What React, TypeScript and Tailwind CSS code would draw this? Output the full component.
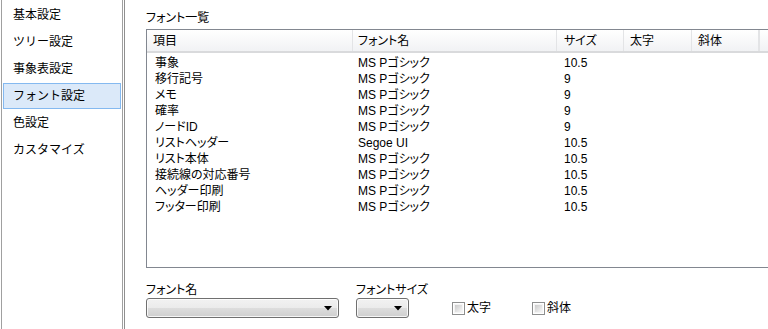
const navItems = ["基本設定", "ツリー設定", "事象表設定", "フォント設定", "色設定", "カスタマイズ"];

const rows = [
  ["事象", "MS Pゴシック", "10.5"],
  ["移行記号", "MS Pゴシック", "9"],
  ["メモ", "MS Pゴシック", "9"],
  ["確率", "MS Pゴシック", "9"],
  ["ノードID", "MS Pゴシック", "9"],
  ["リストヘッダー", "Segoe UI", "10.5"],
  ["リスト本体", "MS Pゴシック", "10.5"],
  ["接続線の対応番号", "MS Pゴシック", "10.5"],
  ["ヘッダー印刷", "MS Pゴシック", "10.5"],
  ["フッター印刷", "MS Pゴシック", "10.5"],
];

function Arrow() {
  return (
    <svg width="8" height="5" viewBox="0 0 8 5" className="block">
      <path d="M0 0h8L4 4.5z" fill="#000" />
    </svg>
  );
}

function Combo({ width }: { width: string }) {
  return (
    <div
      className={`${width} h-[20px] rounded-[3px] border border-[#707070] bg-[linear-gradient(#f2f2f2,#ebebeb_50%,#dddddd_50%,#cfcfcf)] flex items-center justify-end pr-[6px] shadow-[inset_0_0_0_1px_rgba(255,255,255,0.8)]`}
    >
      <Arrow />
    </div>
  );
}

function Check({ label }: { label: string }) {
  return (
    <div className="flex items-center gap-[2px]">
      <div className="w-[13px] h-[13px] border border-[#8e8f8f] bg-white p-[1px]">
        <div className="w-full h-full border border-[#f4f4f4] bg-[linear-gradient(135deg,#cbcbcb,#f6f6f6)]" />
      </div>
      <span className="leading-[14px]">{label}</span>
    </div>
  );
}

export default function App() {
  return (
    <div className="flex w-[768px] h-[329px] overflow-hidden bg-white text-black text-[12px] [font-family:'Liberation_Sans','Noto_Sans_CJK_JP',sans-serif]">

      {/* サイドバー */}
      <div className="w-[125px] shrink-0 flex pl-[1px]">
        <div className="w-[122px] border-x border-[#a0a0a0] pt-[2px]">
          {navItems.map((item, i) => (
            <div
              key={item}
              className={
                i === 3
                  ? "h-[26px] mb-[1px] mx-[1px] flex items-center pl-[9px] border border-[#84b9f0] bg-[#dbe9f9]"
                  : "h-[26px] mb-[1px] mx-[1px] flex items-center pl-[9px] border border-transparent"
              }
            >
              {item}
            </div>
          ))}
        </div>
        <div className="w-[1px]" />
        <div className="w-[1px] bg-[#8f8f8f]" />
      </div>

      {/* メイン */}
      <div className="flex-1 pl-[21px] pt-[10px] [font-feature-settings:'palt']">
        <div className="leading-[16px] mb-[3px]">フォント一覧</div>

        <div className="w-[640px] h-[239px] border border-[#828790]">
          <div className="flex h-[23px] border-b-2 border-[#d9dadc] bg-[linear-gradient(#ffffff,#f1f2f4)]">
            <div className="w-[206px] pl-[6px] flex items-center border-r border-[#e3e4e6]">項目</div>
            <div className="w-[204px] pl-[5px] flex items-center border-r border-[#e3e4e6]">フォント名</div>
            <div className="w-[67px] pl-[7px] flex items-center border-r border-[#e3e4e6]">サイズ</div>
            <div className="w-[68px] pl-[6px] flex items-center border-r border-[#e3e4e6]">太字</div>
            <div className="w-[68px] pl-[6px] flex items-center border-r-2 border-[#e3e4e6]">斜体</div>
            <div className="flex-1" />
          </div>
          <div className="pt-[2px]">
            {rows.map(([name, font, size]) => (
              <div key={name} className="flex h-[16px] items-center">
                <div className="w-[206px] pl-[8px]">{name}</div>
                <div className="w-[204px] pl-[5px]">{font}</div>
                <div className="w-[67px] pl-[7px]">{size}</div>
              </div>
            ))}
          </div>
        </div>

        <div className="flex items-end mt-[15px]">
          <div className="w-[193px]">
            <div className="leading-[14px] mb-[1px]">フォント名</div>
            <Combo width="w-[193px]" />
          </div>
          <div className="w-[53px] ml-[17px]">
            <div className="leading-[14px] mb-[1px] whitespace-nowrap">フォントサイズ</div>
            <Combo width="w-[53px]" />
          </div>
          <div className="flex items-center h-[20px] ml-[43px] gap-[41px]">
            <Check label="太字" />
            <Check label="斜体" />
          </div>
        </div>
      </div>
    </div>
  );
}
